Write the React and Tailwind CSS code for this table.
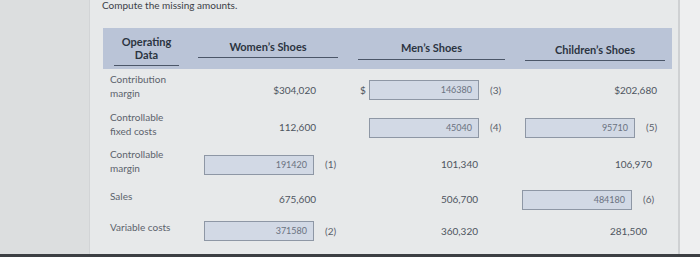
const rows = [
  {
    label: ["Contribution", "margin"],
    h: "h-[38px]",
    women: { value: "$304,020" },
    men: { input: "146380", mark: "(3)", dollar: true },
    kids: { value: "$202,680", end: "pr-[18px]" },
  },
  {
    label: ["Controllable", "fixed costs"],
    h: "h-[37px]",
    women: { value: "112,600" },
    men: { input: "45040", mark: "(4)" },
    kids: { input: "95710", mark: "(5)" },
  },
  {
    label: ["Controllable", "margin"],
    h: "h-[37px]",
    women: { input: "191420", mark: "(1)" },
    men: { value: "101,340" },
    kids: { value: "106,970", end: "pr-[23px]" },
  },
  {
    label: ["Sales"],
    h: "h-[33px]",
    women: { value: "675,600" },
    men: { value: "506,700" },
    kids: { input: "484180", mark: "(6)", shift: true },
  },
  {
    label: ["Variable costs"],
    h: "h-[30px]",
    women: { input: "371580", mark: "(2)" },
    men: { value: "360,320" },
    kids: { value: "281,500", end: "pr-[28px]" },
  },
];

function Cell({ data, kind }) {
  // input boxes sit at slightly different offsets per column
  const pad =
    kind === "women" ? "pl-[14px]" : kind === "men" ? "pl-[5px]" : data.shift ? "pl-[7px]" : "pl-[10px]";
  if (data.input) {
    return (
      <div className={`flex items-center ${pad}`}>
        {kind === "men" && (
          <span className={`w-[9px] text-[10px] text-[#4b525c] ${data.dollar ? "" : "invisible"}`}>$</span>
        )}
        <div className="flex h-[20px] w-[110px] items-center justify-end border border-[#8e97a5] bg-[#d2d9e5] pr-[6px] text-[9px] text-[#6a7280]">
          {data.input}
        </div>
        <span className="ml-[11px] text-[10px] text-[#5a616b]">{data.mark}</span>
      </div>
    );
  }
  const end = data.end || (kind === "women" ? "pr-[39px]" : "pr-[37px]");
  return (
    <div className={`flex justify-end text-[10px] text-[#4e555f] ${end}`}>{data.value}</div>
  );
}

export default function App() {
  return (
    <div
      className="relative flex h-[257px] w-[700px] overflow-hidden bg-[#e7e9ea]"
      style={{ fontFamily: "Lato, 'Open Sans', sans-serif" }}
    >
      {/* left gutter of the photographed screen */}
      <div className="h-full w-[90px] border-r border-[#d2d4d6] bg-[#dcdedf]" />

      <div className="flex w-[590px] flex-col border-r-2 border-[#cfd1d3]">
        <p className="-mt-[2px] ml-[12px] text-[10px] text-[#3b4047]">Compute the missing amounts.</p>

        {/* header band */}
        <div className="ml-[13px] mt-[15px] flex h-[41px] w-[569px] items-stretch bg-[#bac4d7]">
          <div className="flex w-[87px] flex-col items-center justify-center">
            <div className="mt-[3px] flex flex-col items-center border-b border-[#4b5668] px-[8px] pb-[4px] text-[11px] font-bold leading-[13px] text-[#2c3441]">
              <span>Operating</span>
              <span>Data</span>
            </div>
          </div>
          <div className="flex w-[165px] items-center pl-[8px]">
            <div className="w-[140px] border-b border-[#4b5668] pb-[2px] text-center text-[11px] font-bold text-[#2c3441]">
              Women’s Shoes
            </div>
          </div>
          <div className="flex w-[162px] items-center pl-[3px]">
            <div className="mt-[3px] w-[147px] border-b border-[#4b5668] pb-[2px] text-center text-[11px] font-bold text-[#2c3441]">
              Men’s Shoes
            </div>
          </div>
          <div className="flex w-[155px] items-center pl-[8px]">
            <div className="mt-[6px] w-[140px] border-b border-[#4b5668] pb-[2px] text-center text-[11px] font-bold text-[#2c3441]">
              Children’s Shoes
            </div>
          </div>
        </div>

        {/* data rows */}
        <div className="ml-[18px] mt-[2px] flex flex-col">
          {rows.map((r) => (
            <div key={r.label.join(" ")} className={`flex items-center ${r.h}`}>
              <div className="flex w-[82px] flex-col pb-[8px] pl-[2px] text-[10px] leading-[14px] text-[#5c636c]">
                {r.label.map((l) => (
                  <span key={l}>{l}</span>
                ))}
              </div>
              <div className="w-[165px]">
                <Cell data={r.women} kind="women" />
              </div>
              <div className="w-[160px]">
                <Cell data={r.men} kind="men" />
              </div>
              <div className="w-[160px]">
                <Cell data={r.kids} kind="kids" />
              </div>
            </div>
          ))}
        </div>
      </div>

      <div className="h-full flex-1 bg-[#eeeff0]" />

      {/* bottom edge of the monitor */}
      <div className="absolute bottom-0 left-0 h-[3px] w-full bg-[#3c3f43]" />
    </div>
  );
}
